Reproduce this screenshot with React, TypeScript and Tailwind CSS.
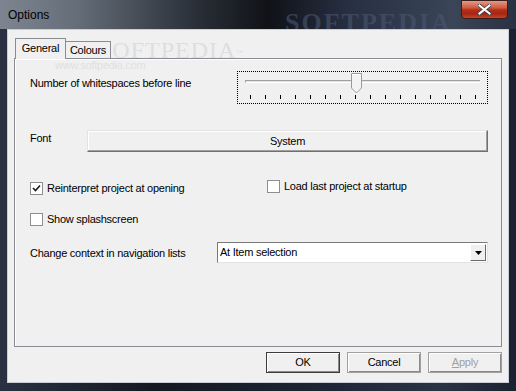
import React from "react";

const ticks = Array.from({ length: 16 }, (_, i) => i);

function Check({ checked, label }: { checked?: boolean; label: string }) {
  return (
    <div className="flex items-center gap-[4px]">
      <div className="w-[13px] h-[13px] bg-white border border-[#8e8f8f] flex items-center justify-center">
        {checked && (
          <svg width="9" height="9" viewBox="0 0 9 9">
            <path d="M1 4 L3.5 6.5 L8 1.5" stroke="#1a1a1a" strokeWidth="1.6" fill="none" />
          </svg>
        )}
      </div>
      <span>{label}</span>
    </div>
  );
}

function Btn({ label, isDefault, disabled }: { label: string; isDefault?: boolean; disabled?: boolean }) {
  return (
    <div
      className={`w-[74px] h-[21px] flex items-center justify-center bg-[#f0f0f0] border ${
        isDefault ? "border-[#3c3c3c]" : "border-[#a0a0a0]"
      } shadow-[inset_1px_1px_0_#ffffff,inset_-1px_-1px_0_#8a8a8a]`}
    >
      <span className={disabled ? "text-[#a0a0a0]" : "text-black"}>
        {disabled ? (
          <>
            <span className="underline">A</span>pply
          </>
        ) : (
          label
        )}
      </span>
    </div>
  );
}

export default function App() {
  return (
    <div className="w-[516px] h-[391px] overflow-hidden bg-[linear-gradient(90deg,#2a3142,#141821_30%,#1c2333_60%,#2a3346_85%,#1b2130)] font-['Liberation_Sans',Arial,sans-serif] text-[11px] tracking-[-0.25px] text-black relative">
      {/* title bar */}
      <div className="h-[29px] relative bg-[linear-gradient(90deg,#7c8590_0%,#646d78_15%,#2a2f38_38%,#101217_52%,#283043_68%,#3a4558_88%,#2a3142_100%)] flex items-center pl-[8px]">
        <span className="text-[12px] tracking-normal text-black">Options</span>
        <span className="absolute left-[285px] top-[3px] text-[26px] font-bold tracking-[2px] text-[#4a5670] opacity-60 font-['Liberation_Serif',serif]">
          SOFTPEDIA
        </span>
        <div className="absolute top-0 right-[8px] w-[47px] h-[19px] rounded-b-[4px] border border-[#3a1e1c] bg-[linear-gradient(180deg,#e39a86_0%,#cf5a40_40%,#b3301a_52%,#a42612_75%,#c4452c_100%)] flex items-center justify-center">
          <svg width="13" height="11" viewBox="0 0 13 11">
            <path d="M1.5 1.5 L11.5 9.5 M11.5 1.5 L1.5 9.5" stroke="#3b3f48" strokeWidth="3.6" strokeLinecap="square" />
            <path d="M1.5 1.5 L11.5 9.5 M11.5 1.5 L1.5 9.5" stroke="#ffffff" strokeWidth="2" strokeLinecap="square" />
          </svg>
        </div>
      </div>

      {/* client area */}
      <div className="ml-[7px] w-[502px] h-[354px] border border-[#c9ced6] bg-[#f0f0f0] flex flex-col relative">
        <span className="absolute left-[90px] top-[2px] text-[24px] text-[#dedede] font-['Liberation_Serif',serif] tracking-[1px]">
          SOFTPEDIA<sup className="text-[7px]">™</sup>
        </span>
        <span className="absolute left-[47px] top-[27px] text-[11px] text-[#e0e0e0]">www.softpedia.com</span>

        {/* tabs */}
        <div className="flex items-end pl-[7px] pt-[7px] h-[28px] relative">
          <div className="h-[21px] w-[51px] bg-[#f0f0f0] border border-b-0 border-[#898c95] flex items-center justify-center relative z-10 -mb-px pb-[2px]">
            General
          </div>
          <div className="h-[17px] w-[45px] bg-[#f0f0f0] border border-b-0 border-l-0 border-[#898c95] flex items-center justify-center">
            Colours
          </div>
        </div>

        {/* tab panel */}
        <div className="ml-[6px] w-[488px] h-[289px] border border-[#898c95] shadow-[inset_1px_1px_0_#ffffff] relative">
          <div className="flex items-start mt-[12px]">
            <span className="ml-[15px] mt-[4px] w-[206px]">Number of whitespaces before line</span>
            <div className="ml-[1px] w-[251px] h-[33px] border border-dotted border-black relative">
              <div className="absolute left-[7px] top-[8px] w-[235px] h-[3px] border-t border-l border-[#a0a0a0] border-b border-b-white bg-[#e3e3e3]" />
              <svg className="absolute left-[113px] top-[1px]" width="11" height="21" viewBox="0 0 11 21">
                <path d="M0.5 0.5 H10.5 V15 L5.5 20 L0.5 15 Z" fill="#f3f3f3" stroke="#9a9a9a" />
                <path d="M1.5 1.5 H9.5" stroke="#ffffff" />
              </svg>
              <div className="absolute left-[12px] top-[23px] flex gap-[14px]">
                {ticks.map((t) => (
                  <div key={t} className="w-px h-[4px] bg-black" />
                ))}
              </div>
            </div>
          </div>

          <div className="flex items-center mt-[26px] h-[22px]">
            <span className="ml-[15px] w-[57px] -mt-[6px]">Font</span>
            <div className="w-[401px] h-[22px] bg-[#f0f0f0] border border-t-[#e3e3e3] border-l-[#e3e3e3] border-r-[#707070] border-b-[#707070] shadow-[inset_-1px_-1px_0_#a0a0a0,inset_1px_1px_0_#ffffff] flex items-center justify-center">
              System
            </div>
          </div>

          <div className="flex mt-[28px] h-[13px]">
            <div className="ml-[15px] w-[237px]">
              <Check checked label="Reinterpret project at opening" />
            </div>
            <Check label="Load last project at startup" />
          </div>

          <div className="flex mt-[20px] h-[13px] ml-[15px]">
            <Check label="Show splashscreen" />
          </div>

          <div className="flex items-center mt-[16px] h-[21px]">
            <span className="ml-[15px] w-[187px] mt-[2px]">Change context in navigation lists</span>
            <div className="w-[271px] h-[21px] bg-white border border-[#7a7a7a] border-r-[#e3e3e3] border-b-[#e3e3e3] flex items-center justify-between pl-[2px] pr-[1px]">
              <span>At Item selection</span>
              <div className="w-[16px] h-[17px] bg-[#f0f0f0] border border-t-white border-l-white border-r-[#6a6a6a] border-b-[#6a6a6a] flex items-center justify-center">
                <svg width="7" height="4" viewBox="0 0 7 4">
                  <path d="M0 0 H7 L3.5 4 Z" fill="#000" />
                </svg>
              </div>
            </div>
          </div>
        </div>

        {/* buttons */}
        <div className="flex justify-end gap-[7px] pr-[6px] mt-[5px]">
          <div className="flex gap-[7px]">
            <Btn label="OK" isDefault />
            <Btn label="Cancel" />
          </div>
          <Btn label="Apply" disabled />
        </div>
      </div>
    </div>
  );
}
